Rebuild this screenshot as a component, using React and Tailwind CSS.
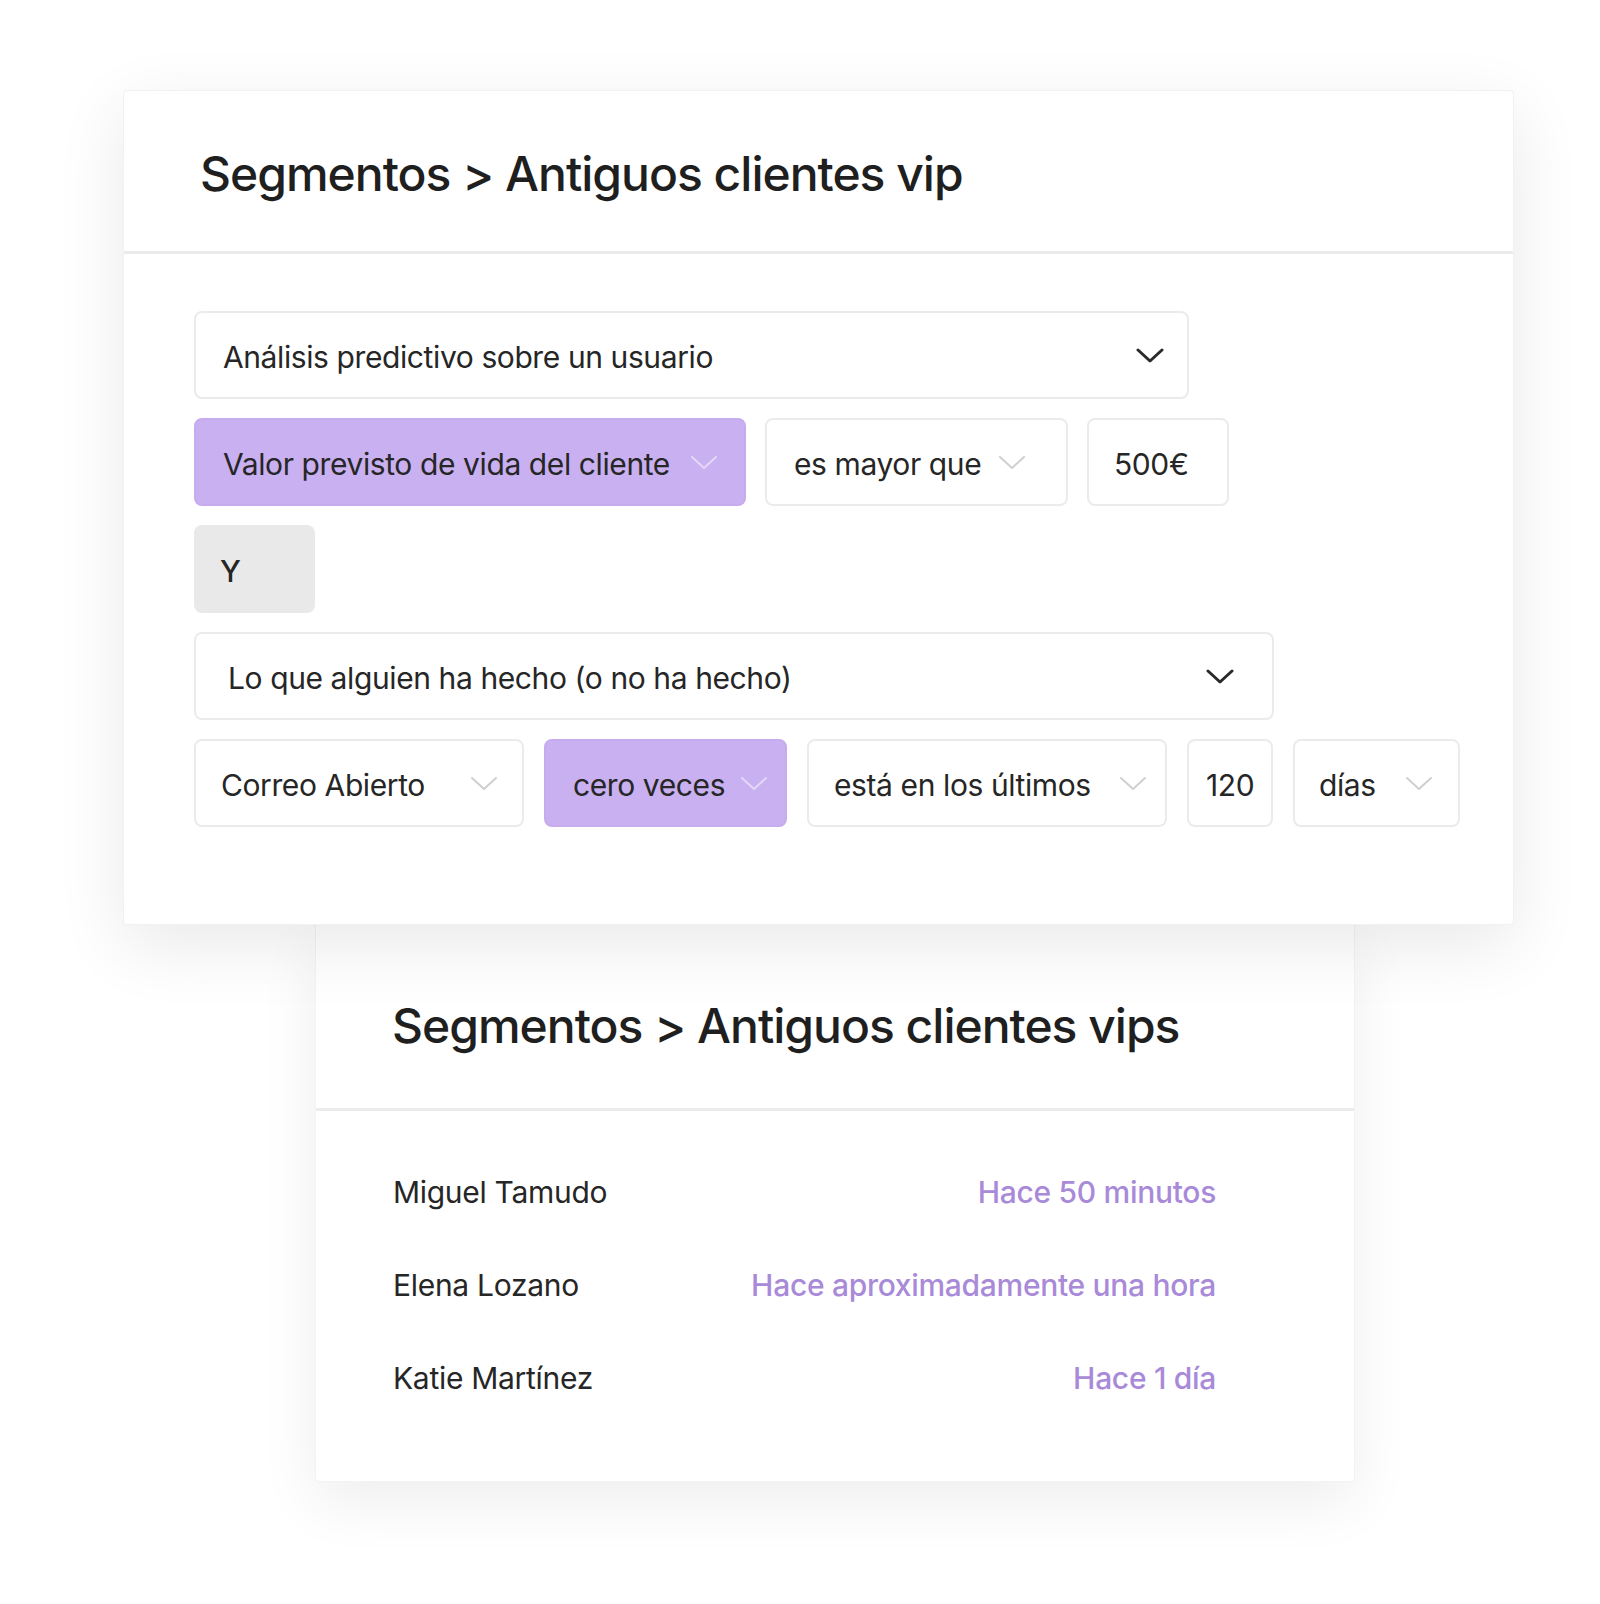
const font = { fontFamily: "Inter, 'Noto Sans', sans-serif" };

const Chevron = ({ tone = "light", className = "" }) => {
  const stroke = {
    dark: "#2a2a2a",
    light: "#cfcfcf",
    purple: "#e4d8f8",
  }[tone];
  const width = tone === "dark" ? 3 : 2;
  return (
    <svg viewBox="0 0 28 15" className={`h-[15px] w-[28px] shrink-0 ${className}`} fill="none">
      <path d="M2 2 L14 13 L26 2" stroke={stroke} strokeWidth={width} strokeLinecap="round" strokeLinejoin="round" />
    </svg>
  );
};

const Field = ({ label, width, purple, chevron = true, pl = "pl-[27px]", pr = "pr-[26px]", tone }) => (
  <div
    className={`flex h-[88px] shrink-0 items-center rounded-[8px] ${pl} ${pr} ${width} ${
      purple ? "border-2 border-[#c6acee] bg-[#c9b0f0]" : "border-2 border-[#ebebeb] bg-white"
    }`}
  >
    <span className="whitespace-nowrap pt-[5px] text-[30px] tracking-[-0.4px] text-[#262626]">{label}</span>
    {chevron ? <Chevron tone={tone || (purple ? "purple" : "light")} className="ml-auto" /> : null}
  </div>
);

const people = [
  { name: "Miguel Tamudo", when: "Hace 50 minutos" },
  { name: "Elena Lozano", when: "Hace aproximadamente una hora" },
  { name: "Katie Martínez", when: "Hace 1 día" },
];

export default function App() {
  return (
    <div className="min-h-[1604px] w-[1600px] bg-white pt-[90px]" style={font}>
      <div className="relative z-10 ml-[123px] w-[1391px] rounded-[4px] border border-[#f1f1f1] bg-white shadow-[0_20px_70px_rgba(0,0,0,0.09)]">
        <div className="flex h-[163px] items-center border-b-[3px] border-[#ebebeb] pl-[76px] pt-[5px]">
          <h1 className="text-[48px] font-medium leading-[58px] tracking-[-1px] text-[#1f1f1f]">
            Segmentos &gt; Antiguos clientes vip
          </h1>
        </div>

        <div className="flex flex-col gap-[19px] pb-[97px] pl-[70px] pt-[57px]">
          <Field label="Análisis predictivo sobre un usuario" width="w-[995px]" tone="dark" pr="pr-[23px]" />

          <div className="flex gap-[19px]">
            <Field label="Valor previsto de vida del cliente" width="w-[552px]" purple pr="pr-[26px]" />
            <Field label="es mayor que" width="w-[303px]" pr="pr-[40px]" />
            <Field label="500€" width="w-[142px]" chevron={false} pl="pl-[25px]" />
          </div>

          <div className="flex h-[88px] w-[121px] items-center rounded-[8px] bg-[#e9e9e9] pl-[26px]">
            <span className="pt-[5px] text-[30px] font-medium text-[#262626]">Y</span>
          </div>

          <Field label="Lo que alguien ha hecho (o no ha hecho)" width="w-[1080px]" tone="dark" pl="pl-[32px]" pr="pr-[38px]" />

          <div className="flex gap-[20px]">
            <Field label="Correo Abierto" width="w-[330px]" pl="pl-[25px]" pr="pr-[24px]" />
            <Field label="cero veces" width="w-[243px]" purple pr="pr-[17px]" />
            <Field label="está en los últimos" width="w-[360px]" pl="pl-[25px]" pr="pr-[18px]" />
            <Field label="120" width="w-[86px]" chevron={false} pl="pl-[17px]" pr="pr-[0px]" />
            <Field label="días" width="w-[167px]" pl="pl-[24px]" pr="pr-[25px]" />
          </div>
        </div>
      </div>

      <div className="ml-[315px] w-[1040px] rounded-b-[4px] border border-t-0 border-[#f3f3f3] bg-white shadow-[0_20px_60px_rgba(0,0,0,0.07)]">
        <div className="flex h-[186px] items-center border-b-[3px] border-[#ebebeb] pl-[76px] pt-[19px]">
          <h2 className="text-[48px] font-medium leading-[58px] tracking-[-1px] text-[#1f1f1f]">
            Segmentos &gt; Antiguos clientes vips
          </h2>
        </div>
        <ul className="pb-[56px] pl-[77px] pr-[138px] pt-[35px]">
          {people.map((p) => (
            <li key={p.name} className="flex h-[93px] items-center justify-between text-[30px] tracking-[-0.3px]">
              <span className="text-[#262626]">{p.name}</span>
              <span className="font-medium text-[#a98ad9]">{p.when}</span>
            </li>
          ))}
        </ul>
      </div>
    </div>
  );
}
